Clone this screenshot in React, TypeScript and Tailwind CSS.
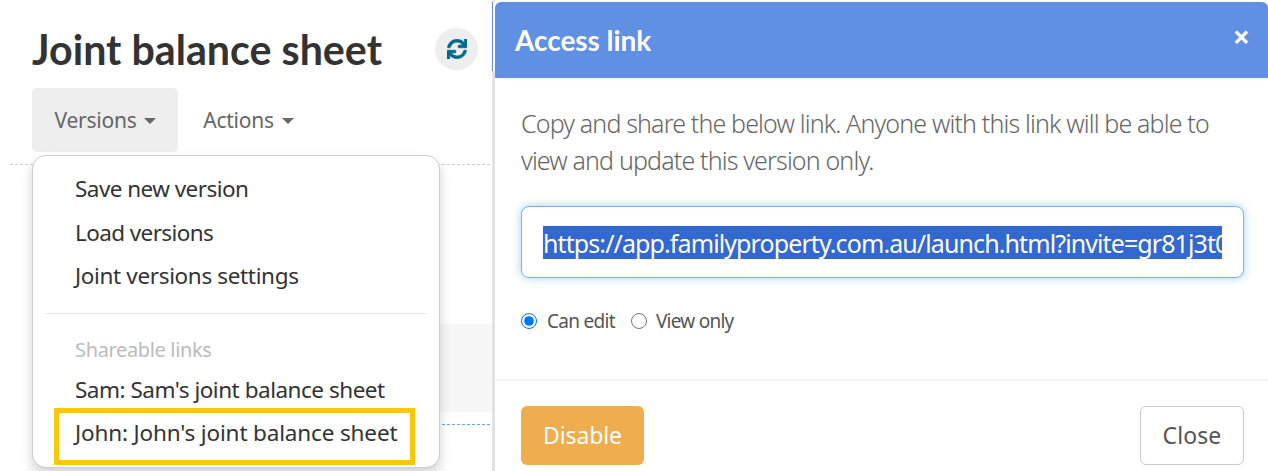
import { FaSync } from "react-icons/fa";

const menuText = "block pl-[42px] text-[22.5px] leading-[30px] text-[#333]";

function Caret() {
  return <span className="ml-[8px] inline-block border-x-[6px] border-t-[6px] border-x-transparent border-t-[#666] align-middle" />;
}

function VersionsMenu() {
  return (
    <div className="absolute left-[32px] top-[155px] z-10 h-[313px] w-[408px] rounded-[14px] border border-[#ccc] bg-white pt-[18px] shadow-[0_6px_12px_rgba(0,0,0,0.18)]">
      <div className="flex flex-col gap-[13.5px]">
        <a className={`${menuText} tracking-[-0.55px]`}>Save new version</a>
        <a className={`${menuText} tracking-[-0.6px]`}>Load versions</a>
        <a className={`${menuText} tracking-[-0.35px]`}>Joint versions settings</a>
      </div>
      <div className="mx-[12px] mt-[22px] h-px bg-[#e5e5e5]" />
      <div className="mt-[21px] pl-[42px] text-[20px] leading-[30px] tracking-[-0.35px] text-[#bbb]">Shareable links</div>
      <a className={`${menuText} mt-[10px] tracking-[-0.48px]`}>Sam: Sam's joint balance sheet</a>
      <div className="absolute left-[21px] top-[252px] h-[57px] w-[361px] border-[5px] border-[#ffc60a]" />
      <a className={`${menuText} mt-[13px] tracking-[-0.15px]`}>John: John's joint balance sheet</a>
    </div>
  );
}

function LeftPanel() {
  return (
    <div className="relative h-full w-[492px] shrink-0 overflow-hidden bg-white">
      <div className="absolute left-[440px] top-[324px] h-[88px] w-[52px] bg-[#f7f7f7]" />
      <div className="absolute left-[10px] right-[2px] top-[164px] border-t border-dashed border-[#ccc]" />
      <div className="absolute left-[32px] right-[2px] top-[424px] border-t border-dashed border-[#6ca6d9]" />
      <div className="relative flex items-center pl-[32px] pt-[27px]">
        <h1 className="w-[403px] font-['Lato'] text-[41.2px] leading-[44px] font-bold text-[#333]">Joint balance sheet</h1>
        <button className="flex h-[42px] w-[43px] items-center justify-center rounded-full bg-[#eee] text-[#00688b]">
          <FaSync className="h-[20px] w-[20px] stroke-current stroke-[16]" />
        </button>
      </div>
      <div className="relative mt-[17px] ml-[32px] flex text-[21px] text-[#666]">
        <button className="flex h-[64px] w-[146px] items-center justify-center rounded-[5px] bg-[#eee] pt-[2px] pl-[1px] tracking-[-0.25px]">
          Versions<Caret />
        </button>
        <button className="flex h-[64px] w-[140px] items-center justify-center pt-[2px] pl-[1px] tracking-[-0.25px]">
          Actions<Caret />
        </button>
      </div>
      <VersionsMenu />
    </div>
  );
}

function AccessLinkDialog() {
  return (
    <div className="relative flex h-full min-w-0 flex-1 flex-col border-l-[3px] border-[#e3e3e3] bg-white pt-[2px]">
      {/* sliver of the page behind the modal */}
      <div className="absolute -left-[3px] top-[2px] h-[69px] w-[3px] border-l border-[#5f90e4] bg-white" />
      <div className="flex h-[76px] shrink-0 items-center justify-between rounded-t-[6px] bg-[#5f90e4] pr-[18px] pl-[20px] text-white">
        <h2 className="font-['Lato'] text-[28px] font-bold tracking-[-0.05px]">Access link</h2>
        <span className="mb-[6px] text-[30px] leading-none font-bold">×</span>
      </div>
      <div className="h-[303px] shrink-0 border-b-2 border-[#f2f2f2] pt-[27px] pr-[24px] pl-[26px]">
        <p className="w-[700px] text-[25px] leading-[37px] font-light tracking-[-0.85px] text-[#666]">
          Copy and share the below link. Anyone with this link will be able to view and update this version only.
        </p>
        <div className="mt-[27px] flex h-[72px] min-w-0 items-center overflow-hidden rounded-[8px] border border-[#74b5f2] bg-white pr-[21px] pl-[21px] shadow-[0_0_8px_rgba(102,175,233,0.6)]">
          <div className="min-w-0 flex-1 overflow-hidden whitespace-nowrap bg-[#3367d1] pt-[2px] text-[25px] leading-[31px] tracking-[-0.9px] text-white">
            https://app.familyproperty.com.au/launch.html?invite=gr81j3t0abcdefgh
          </div>
        </div>
        <div className="mt-[29px] flex items-center text-[19px] text-[#555]">
          <input type="radio" name="access" defaultChecked className="h-[16px] w-[16px] accent-[#0075ff]" />
          <span className="ml-[10px] tracking-[-0.7px]">Can edit</span>
          <input type="radio" name="access" className="ml-[16px] h-[16px] w-[16px]" />
          <span className="ml-[9px] tracking-[-0.75px]">View only</span>
        </div>
      </div>
      <div className="flex flex-1 items-start justify-between pt-[25px] pr-[24px] pl-[26px] text-[23px]">
        <button className="flex h-[59px] w-[123px] items-center justify-center rounded-[6px] bg-[#f0ad4e] tracking-[-0.1px] text-white">Disable</button>
        <button className="flex h-[59px] w-[104px] items-center justify-center rounded-[6px] border border-[#ccc] tracking-[0.1px] text-[#555]">Close</button>
      </div>
    </div>
  );
}

export default function App() {
  return (
    <div className="flex h-[471px] w-[1268px] overflow-hidden bg-white font-['Noto_Sans','Open_Sans',sans-serif]">
      <LeftPanel />
      <AccessLinkDialog />
    </div>
  );
}
